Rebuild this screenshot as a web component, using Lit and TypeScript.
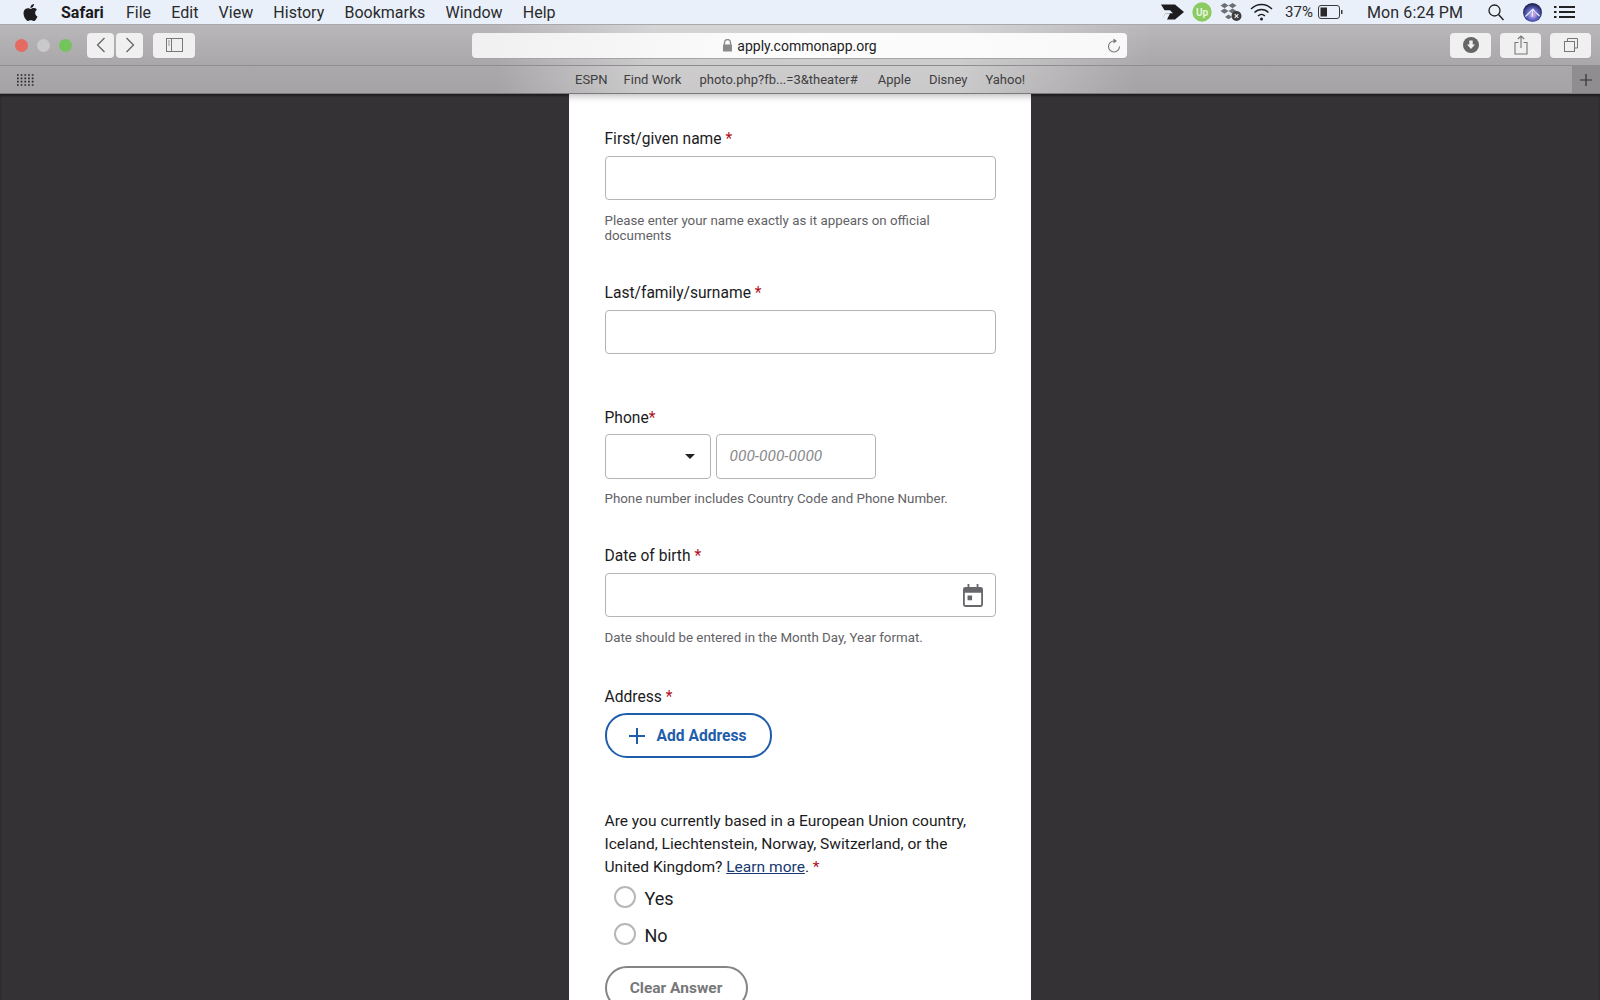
import { LitElement, html, css, svg } from "lit";
import { customElement } from "lit/decorators.js";

const apple = svg`<path d="M12.152 6.896c-.948 0-2.415-1.078-3.96-1.04-2.04.027-3.91 1.183-4.961 3.014-2.117 3.675-.546 9.103 1.519 12.09 1.013 1.454 2.208 3.09 3.792 3.039 1.52-.065 2.09-.987 3.935-.987 1.831 0 2.35.987 3.96.948 1.637-.026 2.676-1.48 3.676-2.948 1.156-1.688 1.636-3.325 1.662-3.415-.039-.013-3.182-1.221-3.22-4.857-.026-3.04 2.48-4.494 2.597-4.559-1.429-2.09-3.623-2.324-4.39-2.376-2-.156-3.675 1.09-4.61 1.09zM15.53 3.83c.843-1.012 1.4-2.427 1.245-3.83-1.207.052-2.662.805-3.532 1.818-.78.896-1.454 2.338-1.273 3.714 1.338.104 2.715-.688 3.559-1.701" fill="#1d1d1f"/>`;

@customElement("app-root")
export class AppRoot extends LitElement {
  static styles = css`
    :host { display: block; width: 1600px; height: 1000px; overflow: hidden; background: #343235; font-family: Roboto, "Liberation Sans", sans-serif; color: #1c1c1e; }
    svg { display: block; flex: none; }

    .menubar { height: 24px; background: #e9f0f9; display: flex; align-items: center; font-size: 16px; color: #2a2a2c; box-sizing: border-box; padding-left: 22px; }
    .menubar .items { display: flex; gap: 20.2px; margin-left: 22px; }
    .menubar .items b { font-weight: 700; color: #1b1b1d; margin-right: 2px; }
    .status { margin-left: auto; display: flex; align-items: center; padding-right: 25px; }
    .m8 { margin-left: 8px; }
    .wifi { margin-left: 8px; }
    .batt { margin-left: 5px; }
    .search { margin-left: 25px; }
    .siri { margin-left: 19px; }
    .list { margin-left: 12px; }
    .up { font-size: 10px; font-weight: 700; fill: #e6f5da; }
    .pct { font-size: 15px; margin-left: 12px; }
    .clock { font-size: 16px; margin-left: 24px; letter-spacing: 0.12px; }

    .toolbar { height: 42px; box-sizing: border-box; border-top: 1px solid #a9a9ad; border-bottom: 1px solid #8f8d8f; background: linear-gradient(90deg, rgba(255,255,255,0) 31%, rgba(255,255,255,.42) 41%, rgba(255,255,255,.42) 60%, rgba(255,255,255,0) 72%), linear-gradient(#b9b7b9, #a9a7a9); display: flex; align-items: center; padding: 0 9px 0 15px; }
    .light { width: 13px; height: 13px; border-radius: 50%; margin-right: 9px; }
    .red { background: #e56a62; }
    .grey { background: #c9c8ca; }
    .green { background: #74c45e; margin-right: 15px; }
    .btn { height: 25px; background: #f1f0f1; border-radius: 4px; display: flex; align-items: center; justify-content: center; box-shadow: 0 1px 0 #a5a3a5; }
    .nav { width: 27px; margin-right: 2px; }
    .side { width: 42px; margin-left: 8px; }
    .address { width: 655px; height: 25px; margin-left: 277px; border-radius: 4px; background: linear-gradient(90deg, #f1f0f1, #fdfdfd 50%, #f8f8f8); display: flex; align-items: center; justify-content: center; position: relative; font-size: 14px; color: #1d1d1f; box-shadow: 0 1px 0 #a5a3a5; gap: 4px; }
    .address span { position: relative; top: 1px; }
    .reload { position: absolute; right: 6px; top: 5px; }
    .tools { margin-left: auto; display: flex; gap: 9px; }
    .tools .btn { width: 41px; }

    .bookmarks { height: 28px; box-sizing: border-box; border-bottom: 1px solid #7c7a7c; background: linear-gradient(90deg, rgba(255,255,255,0) 31%, rgba(255,255,255,.42) 40%, rgba(255,255,255,.42) 60%, rgba(255,255,255,0) 71%), linear-gradient(#aaa8aa, #a5a3a5); display: flex; align-items: center; position: relative; font-size: 13px; color: #3e3e40; padding-left: 17px; }
    .links { display: flex; gap: 18px; margin-left: 541px; }
    .espn { margin-right: -2px; }
    .photo { margin-right: 2px; }
    .plus { margin-left: auto; width: 28px; height: 27px; background: #8f8d8f; display: flex; align-items: center; justify-content: center; }

    main { display: flex; justify-content: center; box-shadow: inset 0 2px 2px #1f1e1f; }
    .panel { width: 462px; height: 906px; box-sizing: border-box; background: #fff; padding: 35px 35px 0 35.5px; box-shadow: inset 0 9px 8px -8px #aaa; overflow: hidden; }
    .label { font-size: 15.6px; line-height: 20px; color: #1b1b1e; }
    .req { color: #b0101c; }
    .input { height: 44px; box-sizing: border-box; border: 1px solid #b4b4b6; border-radius: 4px; margin-top: 7px; width: 391px; background: #fff; }
    .hint { font-size: 13.33px; line-height: 15px; color: #626266; margin-top: 13px; width: 370px; }
    .hint.tight { margin-top: 12px; }
    .f2 { margin-top: 40px; }
    .f3 { margin-top: 54px; }
    .f4 { margin-top: 40.5px; }
    .f5 { margin-top: 42px; }
    .row { display: flex; gap: 5px; margin-top: 6px; }
    .row .input { margin-top: 0; display: flex; align-items: center; height: 44.5px; }
    .select { width: 106px; justify-content: flex-end; padding-right: 15px; }
    .tri { width: 0; height: 0; border: 5.5px solid transparent; border-top: 5.5px solid #222; border-bottom: 0; }
    .phone { width: 160px; padding-left: 13px; font-size: 15.5px; font-style: italic; color: #8a8a8c; }
    .date { display: flex; align-items: center; justify-content: flex-end; padding-right: 12px; }
    .pill { display: inline-flex; align-items: center; height: 44px; box-sizing: border-box; border-radius: 22px; background: #fff; font-size: 15.6px; font-weight: 700; }
    .add { margin-top: 6px; height: 45px; width: 167px; border: 2px solid #1f5dab; color: #1f5dab; padding-left: 22px; gap: 12px; }
    .q { margin-top: 52px; font-size: 15.56px; line-height: 23px; color: #1b1b1e; width: 391px; }
    .q a { color: #17396f; text-decoration: underline; }
    .radios { margin-top: 1px; }
    .radio { height: 37px; display: flex; align-items: center; padding-left: 9px; gap: 9px; font-size: 18px; }
    .dot { width: 22px; height: 22px; box-sizing: border-box; border: 2px solid #b7b7b9; border-radius: 50%; margin-bottom: 4px; }
    .clear { margin-top: 12px; width: 143px; border: 2px solid #858587; color: #77777a; justify-content: center; display: flex; font-size: 15.5px; }
  `;

  render() {
    return html`
      <div class="menubar">
        <svg width="17" height="19" viewBox="0 0 24 24">${apple}</svg>
        <div class="items"><b>Safari</b><span>File</span><span>Edit</span><span>View</span><span>History</span><span>Bookmarks</span><span>Window</span><span>Help</span></div>
        <div class="status">
          <svg width="23" height="16" viewBox="0 0 23 16"><path d="M0 0.500h10l4 0 9 7.500-9 7.500H6l3-6H4.500L1 15.500l3.500-6.300H12l-3-3H3.500zM9 1l4.500 4.500H6z" fill="#1d1d20"/></svg>
          <svg class="m8" width="20" height="20" viewBox="0 0 20 20"><circle cx="10" cy="10" r="9.700" fill="#8ccb62"/><text class="up" x="10" y="13.500" text-anchor="middle">Up</text></svg>
          <svg class="m8" width="22" height="20" viewBox="0 0 22 20"><path d="M4.500 1l4 2.600-4 2.600-4-2.600zM12.500 1l4 2.600-4 2.600-4-2.600zM4.500 6.500l4 2.600-4 2.600-4-2.600zM12.500 6.500l4 2.600-4 2.600-4-2.600zM8.500 12.500l3.500 2.400-3.500 2.400-3.500-2.400z" fill="#6d6e72"/><circle cx="16.500" cy="14" r="5" fill="#3d3d40"/><path d="M14.700 12.200l3.600 3.600M18.300 12.200l-3.600 3.600" stroke="#eee" stroke-width="1.200"/></svg>
          <svg class="wifi" width="23" height="18" viewBox="0 0 23 18"><path d="M1 6c6-6 15-6 21 0M4.500 9.500c4-4 10-4 14 0M8 13c2-2 5-2 7 0" fill="none" stroke="#1f1f22" stroke-width="1.400"/><circle cx="11.500" cy="16" r="1.500" fill="#1f1f22"/></svg>
          <span class="pct">37%</span>
          <svg class="batt" width="25" height="14" viewBox="0 0 25 14"><rect x=".5" y=".5" width="21" height="13" rx="2.500" fill="none" stroke="#3a3a3d"/><rect x="2.500" y="2.500" width="6.500" height="9" fill="#2a2a2c"/><rect x="23" y="5" width="1.500" height="4" fill="#3a3a3d"/></svg>
          <span class="clock">Mon 6:24 PM</span>
          <svg class="search" width="16" height="17" viewBox="0 0 16 17"><circle cx="6.500" cy="6.500" r="5.500" fill="none" stroke="#222" stroke-width="1.300"/><path d="M10.500 10.500l5 5.500" stroke="#222" stroke-width="1.500"/></svg>
          <svg class="siri" width="19" height="19" viewBox="0 0 19 19"><defs><radialGradient id="siri" cx=".5" cy=".6" r=".55"><stop offset="0" stop-color="#c6c3f2"/><stop offset=".55" stop-color="#5f62c4"/><stop offset="1" stop-color="#1f2650"/></radialGradient></defs><circle cx="9.500" cy="9.500" r="9.500" fill="url(#siri)"/><path d="M2.500 13.500L10 6l2.500 3.500 4 3.500M10 6l-1 8" fill="none" stroke="#f3eefc" stroke-width="1.100"/><path d="M12.500 9.500l-1 5" stroke="#e88bc4" stroke-width="1"/></svg>
          <svg class="list" width="21" height="14" viewBox="0 0 21 14"><path d="M0 2h2.500M0 7h2.500M0 12h2.500" stroke="#222" stroke-width="2"/><path d="M5 2h16M5 7h16M5 12h16" stroke="#222" stroke-width="2"/></svg>
        </div>
      </div>

      <div class="toolbar">
        <span class="light red"></span><span class="light grey"></span><span class="light green"></span>
        <div class="btn nav"><svg width="10" height="16" viewBox="0 0 10 16"><path d="M8.500 1L1.500 8l7 7" fill="none" stroke="#666" stroke-width="1.300"/></svg></div>
        <div class="btn nav"><svg width="10" height="16" viewBox="0 0 10 16"><path d="M1.500 1l7 7-7 7" fill="none" stroke="#666" stroke-width="1.300"/></svg></div>
        <div class="btn side"><svg width="17" height="14" viewBox="0 0 17 14"><rect x=".5" y=".5" width="16" height="13" fill="none" stroke="#777"/><path d="M5.500 1v12" stroke="#777"/><path d="M2 3h2M2 5h2M2 7h2" stroke="#999"/></svg></div>
        <div class="address">
          <svg width="11" height="13" viewBox="0 0 11 13"><path d="M2.500 6V3.500a3 3 0 0 1 6 0V6" fill="none" stroke="#8a8a8c" stroke-width="1.300"/><rect x="1" y="5.500" width="9" height="7" fill="#8a8a8c"/></svg>
          <span>apply.commonapp.org</span>
          <svg class="reload" width="15" height="15" viewBox="0 0 15 15"><path d="M8 3a5.500 5.500 0 1 0 5.500 5.500" fill="none" stroke="#777" stroke-width="1.100"/><path d="M7.500 .5l3.500 2.500-3.500 2.500z" fill="#777"/></svg>
        </div>
        <div class="tools">
          <div class="btn"><svg width="16" height="16" viewBox="0 0 16 16"><circle cx="8" cy="8" r="8" fill="#666"/><path d="M6.300 3.500h3.400v4h2.300L8 12 4 7.500h2.300z" fill="#f1f0f1"/></svg></div>
          <div class="btn"><svg width="14" height="20" viewBox="0 0 14 20"><path d="M4.500 7.500H1v11.500h12V7.500H9.500M7 13V1M3.800 4L7 1l3.200 3" fill="none" stroke="#777" stroke-width="1.100"/></svg></div>
          <div class="btn"><svg width="14" height="14" viewBox="0 0 14 14"><path d="M3.500 3V.5h10V10H11" fill="none" stroke="#777"/><rect x=".5" y="3.500" width="10" height="10" fill="none" stroke="#777"/></svg></div>
        </div>
      </div>

      <div class="bookmarks">
        <svg width="17" height="12" viewBox="0 0 17 12"><path d="M0 1h17M0 4.400h17M0 7.700h17M0 11h17" stroke="#2a2a2c" stroke-width="1.700" stroke-dasharray="1.700 2"/></svg>
        <div class="links"><span class="espn">ESPN</span><span>Find Work</span><span class="photo">photo.php?fb...=3&amp;theater#</span><span>Apple</span><span>Disney</span><span>Yahoo!</span></div>
        <div class="plus"><svg width="14" height="14" viewBox="0 0 14 14"><path d="M7 1v12M1 7h12" stroke="#333" stroke-width="1.200"/></svg></div>
      </div>

      <main>
        <div class="panel">
          <div class="label">First/given name <span class="req">*</span></div>
          <div class="input"></div>
          <div class="hint">Please enter your name exactly as it appears on official documents</div>

          <div class="label f2">Last/family/surname <span class="req">*</span></div>
          <div class="input"></div>

          <div class="label f3">Phone<span class="req">*</span></div>
          <div class="row">
            <div class="input select"><span class="tri"></span></div>
            <div class="input phone">000-000-0000</div>
          </div>
          <div class="hint tight">Phone number includes Country Code and Phone Number.</div>

          <div class="label f4">Date of birth <span class="req">*</span></div>
          <div class="input date">
            <svg width="20" height="23" viewBox="0 0 22 24" preserveAspectRatio="none"><path d="M5 0h2v3h8V0h2v3h2.500A2.500 2.500 0 0 1 22 5.500v16a2.500 2.500 0 0 1-2.500 2.500h-17A2.500 2.500 0 0 1 0 21.500v-16A2.500 2.500 0 0 1 2.500 3H5zM2 9v12.500a.5.5 0 0 0 .5.5h17a.5.5 0 0 0 .5-.5V9zM5 12h5v5H5z" fill="#68686c" fill-rule="evenodd"/></svg>
          </div>
          <div class="hint">Date should be entered in the Month Day, Year format.</div>

          <div class="label f5">Address <span class="req">*</span></div>
          <div class="pill add">
            <svg width="16" height="16" viewBox="0 0 16 16"><path d="M8 0v16M0 8h16" stroke="#1f5dab" stroke-width="2"/></svg>
            <span>Add Address</span>
          </div>

          <div class="q">Are you currently based in a European Union country, Iceland, Liechtenstein, Norway, Switzerland, or the United Kingdom? <a>Learn more</a>. <span class="req">*</span></div>
          <div class="radios">
            <div class="radio"><span class="dot"></span><span>Yes</span></div>
            <div class="radio"><span class="dot"></span><span>No</span></div>
          </div>
          <div class="pill clear">Clear Answer</div>
        </div>
      </main>
    `;
  }
}
